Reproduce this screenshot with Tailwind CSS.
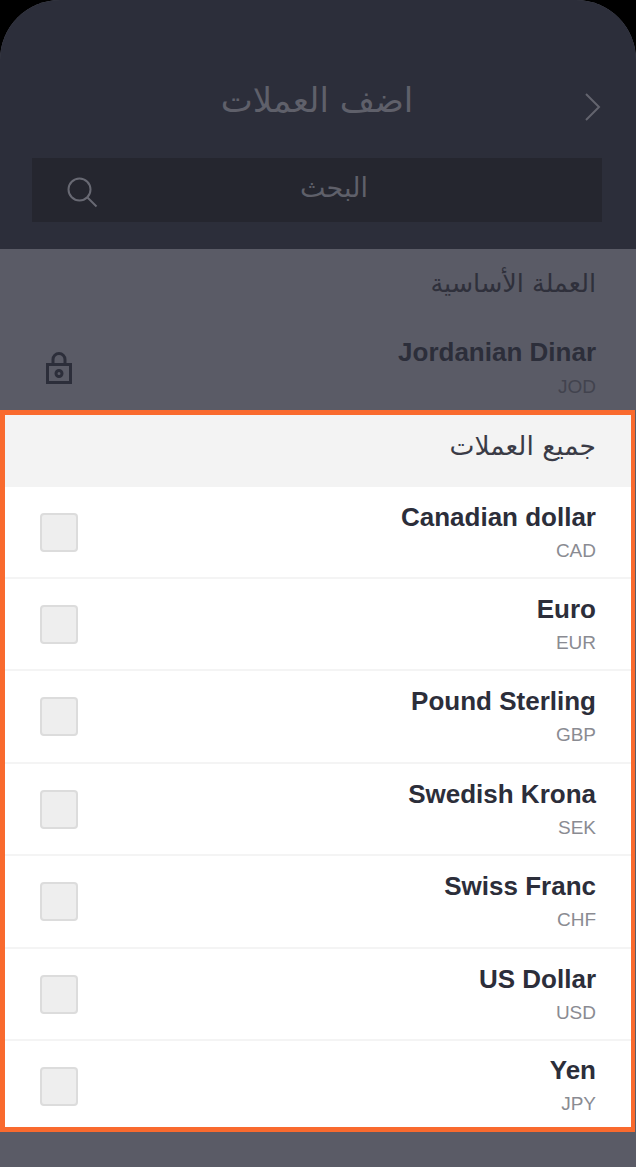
<!DOCTYPE html>
<html lang="ar" dir="rtl">
<head>
  <meta charset="UTF-8" />
  <title>اضف العملات</title>
  <script src="https://cdn.jsdelivr.net/npm/@tailwindcss/browser@4"></script>
</head>
<body class="bg-black">
  <div class="w-[636px] h-[1167px] overflow-hidden rounded-t-[60px] bg-[#5a5b66] font-['Liberation_Sans',sans-serif]">
    <!-- Header -->
    <div class="h-[249px] bg-[#2c2e3a] pt-[80px] pl-[32px] pr-[34px]">
      <div class="relative h-[40px] flex items-center justify-center">
        <h1 class="text-[34px] leading-[40px] text-[#5f606a] font-['DejaVu_Sans',sans-serif] font-normal">اضف العملات</h1>
        <svg class="absolute left-[552px] top-[12px]" width="18" height="30" viewBox="0 0 18 30" fill="none" stroke="#63646e" stroke-width="2"><path d="M2 2l13 13L2 28"/></svg>
      </div>
      <div class="relative mt-[38px] h-[64px] bg-[#25262f] flex items-center justify-center pl-[34px] pb-[4px]">
        <span class="text-[27px] text-[#5f606a] font-['DejaVu_Sans',sans-serif]">البحث</span>
        <svg class="absolute left-[34px] top-[18px]" width="32" height="32" viewBox="0 0 32 32" fill="none" stroke="#686973" stroke-width="2"><circle cx="13.5" cy="13.5" r="11"/><path d="M21.5 21.5l9 9"/></svg>
      </div>
    </div>

    <!-- Base currency -->
    <div class="h-[73px] flex items-center px-[40px] pb-[4px] text-[25.5px] text-[#2f303b] font-['DejaVu_Sans',sans-serif]">العملة الأساسية</div>
    <div class="h-[88px] flex items-center justify-between pr-[40px] pl-[46px]">
      <div class="text-right pt-[3px]" dir="ltr">
        <div class="text-[26px] leading-[30px] font-bold text-[#2c2e3a]">Jordanian Dinar</div>
        <div class="mt-[8px] text-[19px] leading-[24px] text-[#42434e]">JOD</div>
      </div>
      <svg class="mt-[4px]" width="26" height="32" viewBox="0 0 26 32" fill="none" stroke="#2c2e3a" stroke-width="3"><rect x="1.5" y="12.5" width="23" height="18"/><path d="M7 12V7.5a6 6 0 0 1 12 0V12"/><circle cx="13" cy="21.5" r="3"/></svg>
    </div>

    <!-- All currencies -->
    <div class="mr-[1px] border-[5px] border-[#f96a2e] border-r-[4px] bg-white h-[722px] w-[635px]">
      <div class="h-[72px] bg-[#f3f3f3] flex items-center pr-[35px] pb-[10px] text-[26.5px] text-[#3a3b46] font-['DejaVu_Sans',sans-serif]">جميع العملات</div>

      <div class="h-[92px] flex items-center justify-between border-b-2 border-[#f4f4f4] pr-[35px] pl-[35px]">
        <div class="text-right" dir="ltr">
          <div class="text-[26px] leading-[30px] font-bold text-[#2c2e3a]">Canadian dollar</div>
          <div class="mt-[7px] text-[19px] leading-[24px] text-[#8a8b92]">CAD</div>
        </div>
        <div class="w-[38px] h-[39px] rounded-[4px] border-2 border-[#dcdcdc] bg-[#eeeeee]"></div>
      </div>
      <div class="h-[92px] flex items-center justify-between border-b-2 border-[#f4f4f4] pr-[35px] pl-[35px]">
        <div class="text-right" dir="ltr">
          <div class="text-[26px] leading-[30px] font-bold text-[#2c2e3a]">Euro</div>
          <div class="mt-[7px] text-[19px] leading-[24px] text-[#8a8b92]">EUR</div>
        </div>
        <div class="w-[38px] h-[39px] rounded-[4px] border-2 border-[#dcdcdc] bg-[#eeeeee]"></div>
      </div>
      <div class="h-[93px] flex items-center justify-between border-b-2 border-[#f4f4f4] pr-[35px] pl-[35px]">
        <div class="text-right" dir="ltr">
          <div class="text-[26px] leading-[30px] font-bold text-[#2c2e3a]">Pound Sterling</div>
          <div class="mt-[7px] text-[19px] leading-[24px] text-[#8a8b92]">GBP</div>
        </div>
        <div class="w-[38px] h-[39px] rounded-[4px] border-2 border-[#dcdcdc] bg-[#eeeeee]"></div>
      </div>
      <div class="h-[92px] flex items-center justify-between border-b-2 border-[#f4f4f4] pr-[35px] pl-[35px]">
        <div class="text-right" dir="ltr">
          <div class="text-[26px] leading-[30px] font-bold text-[#2c2e3a]">Swedish Krona</div>
          <div class="mt-[7px] text-[19px] leading-[24px] text-[#8a8b92]">SEK</div>
        </div>
        <div class="w-[38px] h-[39px] rounded-[4px] border-2 border-[#dcdcdc] bg-[#eeeeee]"></div>
      </div>
      <div class="h-[93px] flex items-center justify-between border-b-2 border-[#f4f4f4] pr-[35px] pl-[35px]">
        <div class="text-right" dir="ltr">
          <div class="text-[26px] leading-[30px] font-bold text-[#2c2e3a]">Swiss Franc</div>
          <div class="mt-[7px] text-[19px] leading-[24px] text-[#8a8b92]">CHF</div>
        </div>
        <div class="w-[38px] h-[39px] rounded-[4px] border-2 border-[#dcdcdc] bg-[#eeeeee]"></div>
      </div>
      <div class="h-[92px] flex items-center justify-between border-b-2 border-[#f4f4f4] pr-[35px] pl-[35px]">
        <div class="text-right" dir="ltr">
          <div class="text-[26px] leading-[30px] font-bold text-[#2c2e3a]">US Dollar</div>
          <div class="mt-[7px] text-[19px] leading-[24px] text-[#8a8b92]">USD</div>
        </div>
        <div class="w-[38px] h-[39px] rounded-[4px] border-2 border-[#dcdcdc] bg-[#eeeeee]"></div>
      </div>
      <div class="h-[86px] flex items-center justify-between pr-[35px] pl-[35px] pt-[2px]">
        <div class="text-right" dir="ltr">
          <div class="text-[26px] leading-[30px] font-bold text-[#2c2e3a]">Yen</div>
          <div class="mt-[7px] text-[19px] leading-[24px] text-[#8a8b92]">JPY</div>
        </div>
        <div class="mt-[2px] w-[38px] h-[39px] rounded-[4px] border-2 border-[#dcdcdc] bg-[#eeeeee]"></div>
      </div>
    </div>
  </div>
</body>
</html>
